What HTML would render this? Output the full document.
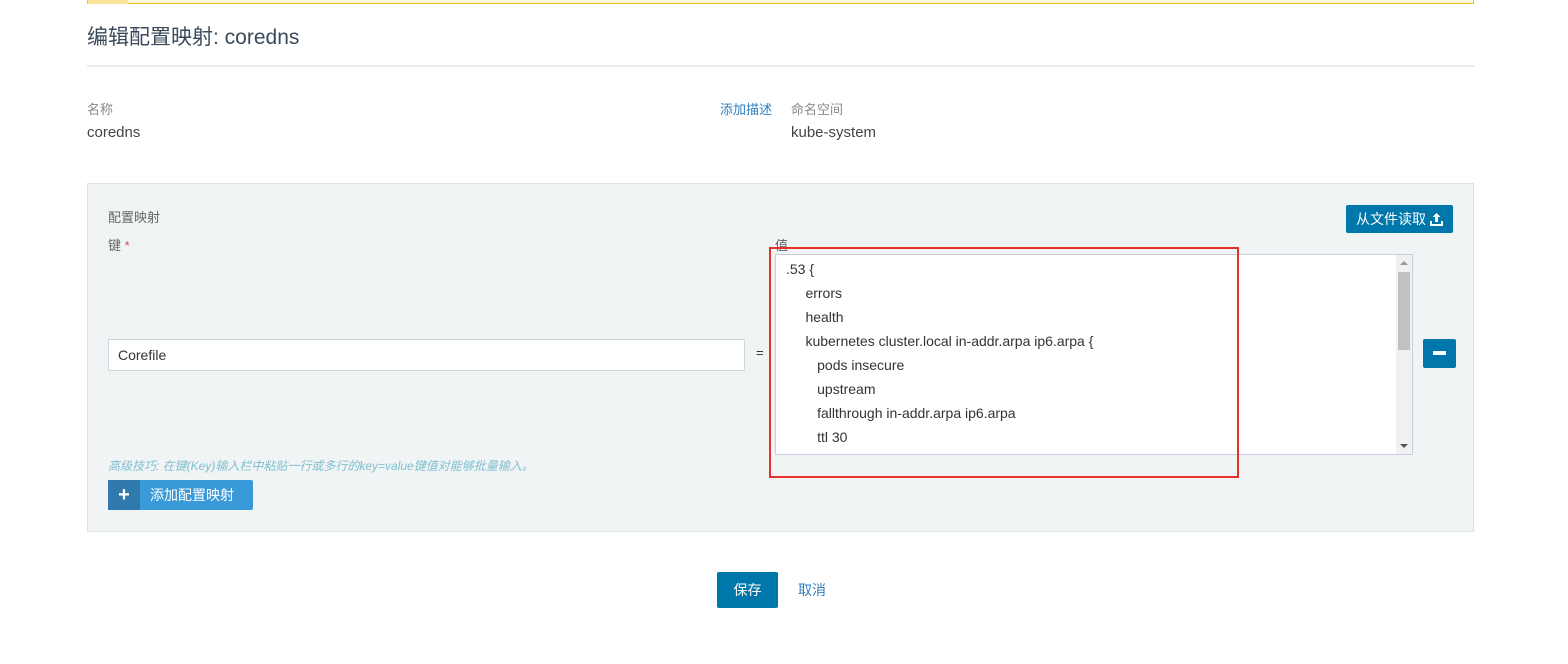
<!DOCTYPE html>
<html><head><meta charset="utf-8"><style>
body{margin:0;width:1568px;height:664px;background:#fff;font-family:"Liberation Sans","Noto Sans CJK SC",sans-serif;color:#333;position:relative;overflow:hidden}
.a{position:absolute}
</style></head><body>
<div class="a" style="left:87px;top:-2px;width:1385px;height:5px;background:#fdf6d8;border:1px solid #f0c419;border-top:none"></div>
<div class="a" style="left:88px;top:0;width:40px;height:4px;background:#fbe39a"></div>
<div class="a" style="left:87px;top:21px;font-size:21px;color:#3a4a5a">编辑配置映射: coredns</div>
<div class="a" style="left:87px;top:65px;width:1387px;height:2px;background:#e8ecee"></div>
<div class="a" style="left:87px;top:99px;font-size:13px;color:#888">名称</div>
<div class="a" style="left:87px;top:124px;font-size:15px;color:#444">coredns</div>
<div class="a" style="left:720px;top:99px;font-size:13px;color:#2e7fbf">添加描述</div>
<div class="a" style="left:791px;top:99px;font-size:13px;color:#888">命名空间</div>
<div class="a" style="left:791px;top:124px;font-size:15px;color:#444">kube-system</div>
<div class="a" style="left:87px;top:183px;width:1385px;height:347px;background:#f1f4f5;border:1px solid #dde3e6"></div>
<div class="a" style="left:108px;top:207px;font-size:13px;color:#666">配置映射</div>
<div class="a" style="left:108px;top:235px;font-size:13px;color:#666">键 <span style="color:#d9534f">*</span></div>
<div class="a" style="left:775px;top:235px;font-size:13px;color:#666">值</div>
<div class="a" style="left:1346px;top:205px;width:107px;height:28px;background:#0077aa;color:#fff;font-size:14px;line-height:28px;border-radius:2px;text-indent:10px">从文件读取
<svg class="a" style="left:84px;top:7px" width="13" height="14" viewBox="0 0 13 14"><path d="M6.5 1 L2.5 5 H5 V10 H8 V5 H10.5 Z" fill="#fff"/><path d="M1 9 V13 H12 V9" stroke="#fff" stroke-width="2" fill="none"/></svg></div>
<div class="a" style="left:108px;top:339px;width:635px;height:30px;background:#fff;border:1px solid #d0d7db;font-size:14px;line-height:30px;text-indent:9px">Corefile</div>
<div class="a" style="left:756px;top:345px;font-size:13px">=</div>
<div class="a" style="left:775px;top:254px;width:636px;height:199px;background:#fff;border:1px solid #ccd;font-size:14px;line-height:24px;padding:0;overflow:hidden">
<div style="padding:2px 0 0 10px;white-space:pre">.53 {
     errors
     health
     kubernetes cluster.local in-addr.arpa ip6.arpa {
        pods insecure
        upstream
        fallthrough in-addr.arpa ip6.arpa
        ttl 30</div>
<div class="a" style="right:0;top:0;width:16px;height:199px;background:#f1f1f1"></div>
<div class="a" style="right:2px;top:17px;width:12px;height:78px;background:#c1c1c1"></div>
<div class="a" style="right:4px;top:6px;width:0;height:0;border:4px solid transparent;border-bottom-color:#999;border-top:none"></div>
<div class="a" style="right:4px;bottom:6px;width:0;height:0;border:4px solid transparent;border-top-color:#555;border-bottom:none"></div>
</div>
<div class="a" style="left:769px;top:247px;width:466px;height:227px;border:2px solid #e8302a"></div>
<div class="a" style="left:1423px;top:339px;width:33px;height:29px;background:#0077aa;border-radius:2px"><div class="a" style="left:10px;top:12px;width:13px;height:4px;background:#fff"></div></div>
<div class="a" style="left:108px;top:457px;font-size:12px;color:#7fbfd0;font-style:italic">高级技巧: 在键(Key)输入栏中粘贴一行或多行的key=value键值对能够批量输入。</div>
<div class="a" style="left:108px;top:480px;width:145px;height:30px;background:#3a9ad9;border-radius:2px"><div class="a" style="left:0;top:0;width:32px;height:30px;background:#2f79ad;color:#fff;font-size:20px;font-weight:bold;line-height:30px;text-align:center">+</div><div class="a" style="left:42px;top:0;line-height:30px;color:#fff;font-size:14px">添加配置映射</div></div>
<div class="a" style="left:717px;top:572px;width:61px;height:36px;background:#0077aa;color:#fff;font-size:14px;line-height:36px;text-align:center;border-radius:2px">保存</div>
<div class="a" style="left:798px;top:580px;font-size:14px;color:#2e7fbf">取消</div>
</body></html>
